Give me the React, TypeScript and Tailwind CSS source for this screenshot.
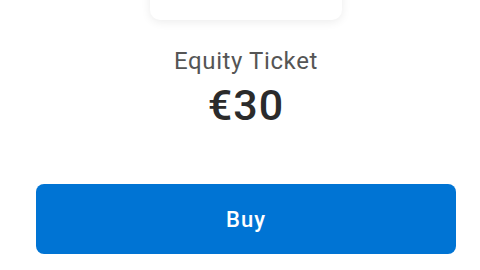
export default function App() {
  return (
    <div className="w-[480px] h-[270px] overflow-hidden bg-white pl-[36px] pr-[24px]" style={{ fontFamily: 'Roboto, "Liberation Sans", sans-serif' }}>
      <div className="flex flex-col items-center">
        <div className="mt-[-80px] h-[100px] w-[192px] rounded-[10px] bg-white shadow-[0_2px_10px_rgba(0,0,0,0.08)]" />
        <div className="mt-[27px] text-[24px] leading-[28px] tracking-[0.6px] text-[#555555]">Equity Ticket</div>
        <div className="mt-[6px] text-[43px] leading-[48px] font-medium tracking-[1px] text-[#2b2b2b]">€30</div>
        <button className="mt-[55px] h-[70px] w-full rounded-[8px] bg-[#0074d4] text-[22px] font-medium tracking-[1px] text-white">Buy</button>
      </div>
    </div>
  );
}
